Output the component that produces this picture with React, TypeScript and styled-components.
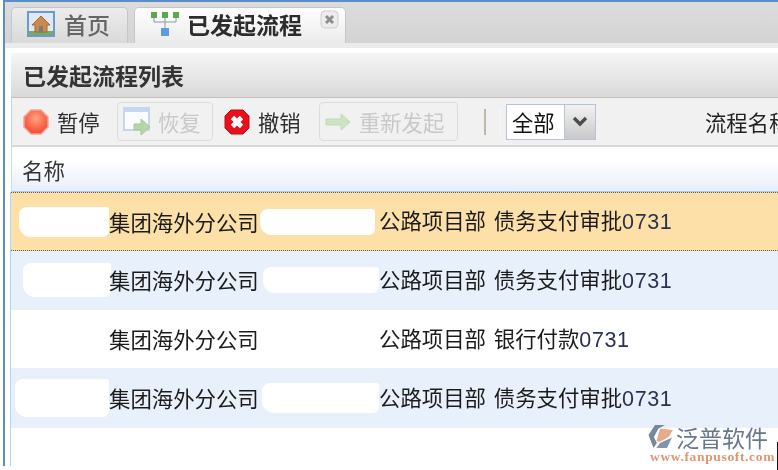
import React from "react";
import styled, { createGlobalStyle } from "styled-components";

const Global = createGlobalStyle`
  html, body { margin: 0; padding: 0; background: #fff; }
  body { width: 778px; height: 470px; overflow: hidden; font-family: "Noto Sans CJK SC", "Liberation Sans", sans-serif; color: #222; }
  #root { position: relative; width: 778px; height: 470px; overflow: hidden; filter: blur(0.4px); }
`;

const Frame = styled.div`
  box-sizing: border-box;
  margin-left: 3px;
  width: 775px;
  height: 466px;
  border-top: 2px solid #5c8ec6;
  border-left: 2px solid #5c8ec6;
  display: flex;
  flex-direction: column;
  overflow: hidden;
`;

const TabStrip = styled.div`
  box-sizing: border-box;
  height: 46px;
  flex: none;
  display: flex;
  align-items: flex-start;
  gap: 6px;
  padding: 5px 0 0 6px;
  background: linear-gradient(#dcdcdc, #d4d4d4);
  border-bottom: 5px solid #ebebeb;
`;

const Tab = styled.div<{ $active?: boolean; $width: number }>`
  box-sizing: border-box;
  width: ${(p) => p.$width}px;
  height: 36px;
  display: flex;
  align-items: center;
  padding-bottom: 3px;
  border: 1px solid #c6c6c6;
  border-bottom: none;
  border-radius: 5px 5px 0 0;
  background: ${(p) => (p.$active ? "linear-gradient(#ffffff, #ebebeb)" : "linear-gradient(#ececec, #dadada)")};
  color: ${(p) => (p.$active ? "#2c2c2c" : "#666")};
  font-size: 23px;
  font-weight: ${(p) => (p.$active ? 700 : 500)};
  line-height: 1;
  white-space: nowrap;
`;

const TabIcon = styled.svg<{ $left: number; $right: number }>`
  flex: none;
  margin: 0 ${(p) => p.$right}px 0 ${(p) => p.$left}px;
`;

const CloseIcon = styled.svg`
  flex: none;
  margin: -10px 0 0 18px;
`;

const Panel = styled.div`
  flex: 1;
  margin: 5px 0 0 6px;
  display: flex;
  flex-direction: column;
  min-height: 0;
  min-width: 0;
`;

const PanelTitle = styled.div`
  box-sizing: border-box;
  flex: none;
  height: 45px;
  display: flex;
  align-items: center;
  padding: 0 0 0 12px;
  background: linear-gradient(#f6f6f6, #d9d9d9);
  border-bottom: 1px solid #c6bebb;
  font-size: 23px;
  font-weight: 700;
  color: #333;
`;

const Toolbar = styled.div`
  box-sizing: border-box;
  flex: none;
  height: 49px;
  display: flex;
  align-items: center;
  padding-left: 11px;
  background: #f1f1f1;
  border-left: 1px solid #d4d0cd;
  border-bottom: 2px solid #d8d8d8;
  font-size: 21.3px;
  white-space: nowrap;
  overflow: hidden;
`;

const ToolItem = styled.div<{ $width: number; $disabled?: boolean; $after: number; $gap: number }>`
  box-sizing: border-box;
  flex: none;
  width: ${(p) => p.$width}px;
  height: 39px;
  display: flex;
  align-items: center;
  gap: ${(p) => p.$gap}px;
  margin-right: ${(p) => p.$after}px;
  color: ${(p) => (p.$disabled ? "#c9c9c9" : "#2e2e2e")};
  ${(p) =>
    p.$disabled
      ? "padding-left: 5px; border: 1px solid #dcdcdc; border-radius: 4px;"
      : ""}
`;

const Separator = styled.div`
  flex: none;
  width: 2px;
  height: 26px;
  margin: 0 20px 0 5px;
  background: #bdb9a6;
  box-shadow: 15px 0 0 -0.5px #fafafa;
`;

const Select = styled.div`
  box-sizing: border-box;
  flex: none;
  width: 90px;
  height: 36px;
  display: flex;
  border: 1px solid #b8c2dc;
  background: #fff;
`;

const SelectValue = styled.div`
  flex: 1;
  display: flex;
  align-items: center;
  padding-left: 5px;
  color: #111;
`;

const SelectArrow = styled.div`
  flex: none;
  width: 30px;
  display: flex;
  align-items: center;
  justify-content: center;
  border-left: 1px solid #b8c2dc;
  background: linear-gradient(#f2f2f2, #c9c9c9);
`;

const FilterLabel = styled.div`
  flex: none;
  margin-left: 109px;
  color: #222;
`;

const GridHead = styled.div`
  box-sizing: border-box;
  flex: none;
  height: 45px;
  display: flex;
  align-items: center;
  padding-left: 10px;
  background: linear-gradient(#ffffff 30%, #e6effa);
  border-left: 1px solid #d8d8d8;
  border-bottom: 1px solid #a9cdf0;
  font-size: 21.5px;
  color: #333;
`;

const Rows = styled.div`
  flex: 1;
  border-left: 1px solid #b4d4f4;
  margin-left: -1px;
  background: #fff;
`;

const Row = styled.div<{ $tone: "selected" | "alt" | "plain" }>`
  box-sizing: border-box;
  height: 59px;
  display: grid;
  grid-template-columns: 98px 151px 119px 1fr;
  align-items: center;
  font-size: 21.4px;
  line-height: 1;
  word-spacing: 3px;
  color: #1b1b1b;
  white-space: nowrap;
  background: ${(p) => (p.$tone === "selected" ? "#fde0a8" : p.$tone === "alt" ? "#e8f1fb" : "#fff")};
  ${(p) =>
    p.$tone === "selected"
      ? "border-top: 1px dotted #555; border-bottom: 1px dotted #555;"
      : "border-bottom: 1px solid #ecf0f4;"}
`;

const Redaction = styled.div<{ $left: number; $width: number; $height: number }>`
  width: ${(p) => p.$width}px;
  height: ${(p) => p.$height}px;
  margin-left: ${(p) => p.$left}px;
  background: #fff;
  border-radius: 8px 3px 6px 12px;
`;

const Cell = styled.div`
  min-width: 0;
`;

const Digits = styled.span`
  font-family: "Liberation Sans", sans-serif;
  font-size: 21.5px;
  letter-spacing: 0.6px;
  color: #2a3050;
`;

const Watermark = styled.div`
  position: absolute;
  left: 648px;
  top: 424px;
  width: 124px;
  display: grid;
  grid-template-columns: 28px 1fr;
  grid-template-rows: 26px 14px;
`;

const WatermarkName = styled.div`
  font-size: 23px;
  line-height: 26px;
  color: #66788f;
  white-space: nowrap;
`;

const WatermarkUrl = styled.div`
  grid-column: 1 / 3;
  padding-left: 2px;
  font-family: "Liberation Serif", serif;
  font-size: 13.5px;
  font-weight: 700;
  line-height: 14px;
  letter-spacing: 0.65px;
  color: #e2946e;
  white-space: nowrap;
`;

const EdgeMark = styled.div`
  position: absolute;
  right: 0;
  top: 442px;
  width: 1px;
  height: 28px;
  background: #111;
`;

const HomeIcon = () => (
  <TabIcon $left={15} $right={9} width="28" height="26" viewBox="0 0 28 26">
    <rect x="1" y="1" width="26" height="24" fill="#dfe9f6" stroke="#6f97d0" strokeWidth="2" />
    <path d="M2 20h24v4H2z" fill="#74ad5c" />
    <path d="M14 5 5 14h3v7h12v-7h3z" fill="#c98a4e" stroke="#a7682f" />
    <rect x="12" y="15" width="4" height="6" fill="#7a7a7a" />
  </TabIcon>
);

const FlowIcon = () => (
  <TabIcon $left={15} $right={7} width="30" height="26" viewBox="0 0 30 26">
    <rect x="1" y="1" width="6" height="6" fill="#5aa84f" />
    <rect x="12" y="1" width="6" height="6" fill="#5aa84f" />
    <rect x="23" y="1" width="6" height="6" fill="#5aa84f" />
    <path d="M4 7v4h22V7M15 7v11" stroke="#8a9aa8" fill="none" />
    <rect x="11" y="17" width="8" height="8" fill="#5d9be0" />
  </TabIcon>
);

const CloseTab = () => (
  <CloseIcon width="19" height="19" viewBox="0 0 19 19">
    <rect x="1" y="1" width="17" height="17" rx="4" fill="#ececec" stroke="#cfcfcf" />
    <path d="M6 6l7 7M13 6l-7 7" stroke="#8e8e8e" strokeWidth="3" />
  </CloseIcon>
);

const StopIcon = () => (
  <svg width="26" height="26" viewBox="0 0 26 26" style={{ flex: "none" }}>
    <defs>
      <radialGradient id="stop" cx="50%" cy="35%" r="70%">
        <stop offset="0" stopColor="#ffa07f" />
        <stop offset="1" stopColor="#f4412a" />
      </radialGradient>
    </defs>
    <path d="M8 1h10l7 7v10l-7 7H8l-7-7V8z" fill="url(#stop)" stroke="#f2a595" strokeWidth="1.5" />
  </svg>
);

const ResumeIcon = () => (
  <svg width="29" height="31" viewBox="0 0 29 31" style={{ flex: "none" }}>
    <rect x="1" y="2" width="25" height="22" fill="#fafcff" stroke="#c6d6ec" strokeWidth="2" />
    <rect x="1" y="2" width="25" height="4" fill="#c6d6ec" />
    <path d="M11 18h7v-5l9 8-9 8v-5h-7z" fill="#b4d6a8" stroke="#a4c998" />
  </svg>
);

const RevokeIcon = () => (
  <svg width="26" height="26" viewBox="0 0 26 26" style={{ flex: "none" }}>
    <path d="M7 1h12l6 6v12l-6 6H7l-6-6V7z" fill="#e8101a" stroke="#c50a12" />
    <path d="M8.5 8.5l9 9M17.5 8.5l-9 9" stroke="#fff" strokeWidth="4.8" />
  </svg>
);

const ArrowIcon = () => (
  <svg width="26" height="18" viewBox="0 0 26 18" style={{ flex: "none" }}>
    <path d="M1 6h15V1l9 8-9 8v-5H1z" fill="#cce3c4" stroke="#c0dab6" />
  </svg>
);

const Chevron = () => (
  <svg width="16" height="11" viewBox="0 0 16 11">
    <path d="M2 2l6 6 6-6" fill="none" stroke="#4d4d4d" strokeWidth="3.4" />
  </svg>
);

const LogoMark = () => (
  <svg width="28" height="28" viewBox="0 0 28 28">
    <path d="M7 1 .5 11l5 13 3.4-5-3-6L10.500 4.500 17 1z" fill="#77879c" />
    <path d="M12 4.500 25 6l-4.500 7-9 5 -3-1 2-7z" fill="#e9a98a" />
    <path d="M12 19l12-5.500-5 10.500H8.500z" fill="#8194aa" />
  </svg>
);

type RowData = {
  tone: "selected" | "alt" | "plain";
  first: [number, number, number];
  second: [number, number, number];
  task: string;
};

const rows: RowData[] = [
  { tone: "selected", first: [8, 90, 30], second: [0, 115, 26], task: "债务支付审批" },
  { tone: "alt", first: [12, 88, 34], second: [3, 116, 26], task: "债务支付审批" },
  { tone: "plain", first: [8, 80, 30], second: [3, 112, 10], task: "银行付款" },
  { tone: "alt", first: [4, 94, 38], second: [2, 117, 30], task: "债务支付审批" },
];

export default function App() {
  return (
    <>
      <Global />
      <Frame>
        <TabStrip>
          <Tab $width={117}>
            <HomeIcon />
            首页
          </Tab>
          <Tab $active $width={212}>
            <FlowIcon />
            已发起流程
            <CloseTab />
          </Tab>
        </TabStrip>
        <Panel>
          <PanelTitle>已发起流程列表</PanelTitle>
          <Toolbar>
            <ToolItem $width={77} $after={17} $gap={8}>
              <StopIcon />
              暂停
            </ToolItem>
            <ToolItem $width={96} $disabled $after={11} $gap={6}>
              <ResumeIcon />
              恢复
            </ToolItem>
            <ToolItem $width={77} $after={18} $gap={8}>
              <RevokeIcon />
              撤销
            </ToolItem>
            <ToolItem $width={139} $disabled $after={21} $gap={8}>
              <ArrowIcon />
              重新发起
            </ToolItem>
            <Separator />
            <Select>
              <SelectValue>全部</SelectValue>
              <SelectArrow>
                <Chevron />
              </SelectArrow>
            </Select>
            <FilterLabel>流程名称</FilterLabel>
          </Toolbar>
          <GridHead>名称</GridHead>
          <Rows>
            {rows.map((r, i) => (
              <Row key={i} $tone={r.tone}>
                <Redaction $left={r.first[0]} $width={r.first[1]} $height={r.first[2]} />
                <Cell>集团海外分公司</Cell>
                <Redaction $left={r.second[0]} $width={r.second[1]} $height={r.second[2]} />
                <Cell>
                  公路项目部 {r.task}
                  <Digits>0731</Digits>
                </Cell>
              </Row>
            ))}
          </Rows>
        </Panel>
      </Frame>
      <Watermark>
        <LogoMark />
        <WatermarkName>泛普软件</WatermarkName>
        <WatermarkUrl>www.fanpusoft.com</WatermarkUrl>
      </Watermark>
      <EdgeMark />
    </>
  );
}
